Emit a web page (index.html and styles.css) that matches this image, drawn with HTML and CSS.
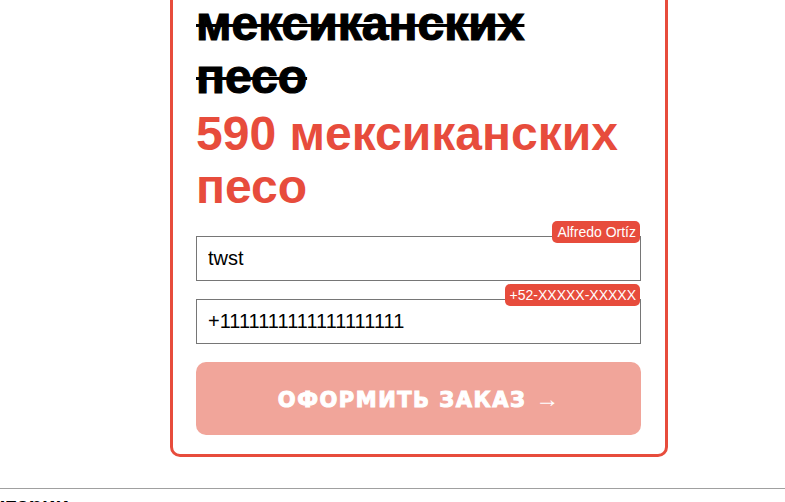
FILE: index.html
```html
<!DOCTYPE html>
<html lang="ru">
<head>
    <meta charset="UTF-8">
    <meta name="viewport" content="width=device-width, initial-scale=1.0">
    <title>Оформить заказ</title>
    <link rel="stylesheet" href="styles.css">
</head>
<body>
    <div class="order-card">
        <p class="old-price">1190<br>мексиканских песо</p>
        <p class="new-price">590 мексиканских песо</p>
        <form class="order-form">
            <label class="field">
                <span class="field-hint">Alfredo Ortíz</span>
                <input type="text" name="name" value="twst">
            </label>
            <label class="field">
                <span class="field-hint">+52-XXXXX-XXXXX</span>
                <input type="tel" name="phone" value="+1111111111111111111">
            </label>
            <button class="order-btn" type="submit">Оформить заказ <span class="arrow">→</span></button>
        </form>
    </div>

    <!-- Comments -->
    <hr class="divider">
    <h2 class="comments-title">Комментарии</h2>
</body>
</html>
```

FILE: styles.css
```css
body {
    font-family: "Liberation Sans", Arial, sans-serif;
    margin: 0;
    padding: 0;
    background-color: #ffffff;
    color: #000000;
    overflow: hidden;
}

.order-card {
    width: 445px;
    margin: -79px 0 0 170px;
    padding: 20px 24px 19px 23px;
    border: 3px solid #e74c3c;
    border-radius: 10px;
}

.old-price,
.new-price {
    margin: 0;
    font-size: 48px;
    font-weight: bold;
    line-height: 53px;
}

.old-price {
    text-decoration: line-through;
    text-decoration-thickness: 3px;
    -webkit-text-stroke: 1.2px #000000;
}

.new-price {
    color: #e74c3c;
    margin-top: 4px;
    margin-bottom: 23px;
}

.order-form {
    display: flex;
    flex-direction: column;
    gap: 18px;
}

.field {
    position: relative;
    display: block;
}

.field input {
    display: block;
    box-sizing: border-box;
    width: 100%;
    height: 45px;
    padding: 0 11px;
    border: 1px solid #767676;
    font-family: "Liberation Sans", Arial, sans-serif;
    font-size: 20px;
    color: #000000;
    outline: none;
}

/* Hint badge over the top border of the input */
.field-hint {
    position: absolute;
    top: -15px;
    right: 1px;
    background-color: #e74c3c;
    color: #ffffff;
    font-size: 14px;
    line-height: 22px;
    padding: 0 4px 0 5px;
    border-radius: 5px;
}

.order-btn {
    height: 73px;
    border: none;
    border-radius: 10px;
    background-color: #f1a59a;
    color: #ffffff;
    font-family: "DejaVu Sans", "Liberation Sans", sans-serif;
    font-size: 21px;
    font-weight: bold;
    letter-spacing: 1.5px;
    text-transform: uppercase;
    -webkit-text-stroke: 1px #ffffff;
    cursor: pointer;
}

.order-btn .arrow {
    font-family: "Liberation Sans", sans-serif;
    font-weight: normal;
    font-size: 24px;
    letter-spacing: 0;
    -webkit-text-stroke: 0;
}

.divider {
    margin: 31px 0 0;
    border: none;
    border-top: 1px solid #a0a0a0;
}

.comments-title {
    margin: 4px 0 0 -79px;
    font-size: 22px;
    font-weight: bold;
}
```
